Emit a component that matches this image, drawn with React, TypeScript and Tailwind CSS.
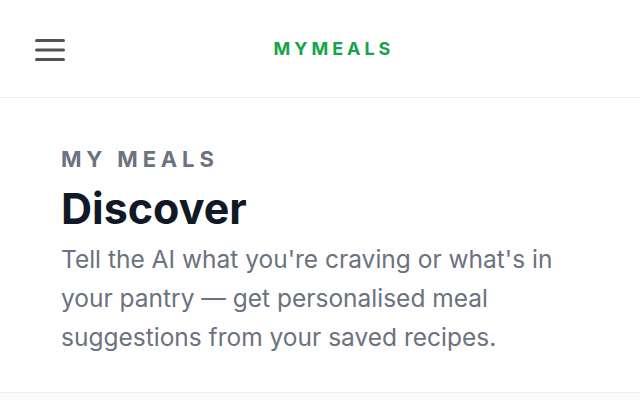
import { useState } from "react";

export default function App() {
  const [menuOpen, setMenuOpen] = useState(false);

  return (
    <div className="min-h-screen bg-[#f9fafb] font-['Inter',sans-serif]">
      {/* Top bar */}
      <header className="h-[98px] bg-white border-b-[1.5px] border-[#efefef] flex items-center px-6">
        <button
          type="button"
          onClick={() => setMenuOpen(!menuOpen)}
          className="p-[11px] text-[#525252]"
          aria-label="Open menu"
        >
          <svg width="30" height="30" viewBox="0 0 30 30" fill="none">
            <path
              d="M1.5 6.5h27M1.5 16h27M1.5 25.5h27"
              stroke="currentColor"
              strokeWidth="3"
              strokeLinecap="round"
            />
          </svg>
        </button>
        <div className="flex-1 text-center">
          <span className="text-[18px] font-bold tracking-[0.22em] text-[#16a34a]">
            MYMEALS
          </span>
        </div>
        <div className="w-6" />
      </header>

      {/* Intro */}
      <section className="bg-white border-b-[1.5px] border-[#efefef] px-[61px] pt-[45px] pb-[35px]">
        <p className="text-[22px] leading-[1.5] font-bold tracking-[0.22em] text-[#6b7280]">
          MY MEALS
        </p>
        <h1 className="mt-[7px] text-[43px] leading-[1.2] font-bold text-[#111827]">
          Discover
        </h1>
        <p className="mt-[5px] text-[24.5px] leading-[39px] text-[#6b7280]">
          Tell the AI what you're craving or what's in your pantry — get
          personalised meal suggestions from your saved recipes.
        </p>
      </section>
    </div>
  );
}
